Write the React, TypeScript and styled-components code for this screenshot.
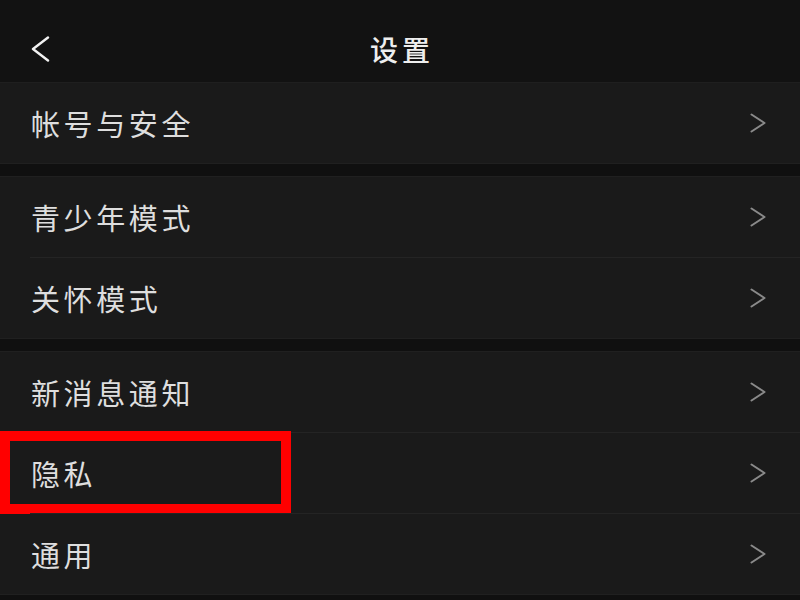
import styled, { createGlobalStyle } from "styled-components";

const Global = createGlobalStyle`
  html, body {
    margin: 0;
    padding: 0;
    background: #101010;
  }
  body {
    font-family: "Noto Sans CJK SC", "Noto Sans", sans-serif;
  }
`;

const Page = styled.div`
  width: 800px;
  height: 600px;
  overflow: hidden;
  background: #101010;
  display: flex;
  flex-direction: column;
`;

const Header = styled.header`
  height: 83px;
  box-sizing: border-box;
  padding-top: 16px;
  flex-shrink: 0;
  display: grid;
  grid-template-columns: 80px 1fr 80px;
  align-items: center;
  background: #121212;
  border-bottom: 1px solid #1f1f1f;
`;

const Back = styled.button`
  background: none;
  border: 0;
  padding: 0 0 0 31px;
  height: 100%;
  display: flex;
  align-items: center;
  color: #f0f0f0;
  cursor: pointer;
`;

const Title = styled.h1`
  margin: 0;
  text-align: center;
  font-size: 28px;
  font-weight: 500;
  letter-spacing: 4px;
  padding-left: 4px;
  color: #eeeeee;
  line-height: 1;
`;

const Group = styled.section`
  background: #1a1a1a;
  border-top: 1px solid #202020;
  border-bottom: 1px solid #202020;
  & + & {
    margin-top: 12px;
  }
`;

const Row = styled.div<{ $first?: boolean }>`
  position: relative;
  height: 80px;
  display: flex;
  align-items: center;
  justify-content: space-between;
  padding: 0 34px 0 31px;
  &::before {
    content: "";
    display: ${({ $first }) => ($first ? "none" : "block")};
    position: absolute;
    top: -1px;
    left: 30px;
    right: 0;
    height: 1px;
    background: #242424;
  }
  & + & {
    margin-top: 1px;
  }
`;

const Label = styled.span`
  font-size: 29px;
  letter-spacing: 3.6px;
  color: #dedede;
  line-height: 1;
`;

const Mark = styled.div`
  position: absolute;
  left: 0;
  top: -2px;
  width: 291px;
  height: 83px;
  box-sizing: border-box;
  border: 10px solid #ff0000;
  pointer-events: none;
`;

const Chevron = ({ color, w, h }: { color: string; w: number; h: number }) => (
  <svg width={w} height={h} viewBox={`0 0 ${w} ${h}`} fill="none">
    <polyline
      points={`1.5,1.5 ${w - 1.5},${h / 2} 1.5,${h - 1.5}`}
      stroke={color}
      strokeWidth="2"
      strokeLinecap="round"
      strokeLinejoin="round"
    />
  </svg>
);

const groups = [
  [{ label: "帐号与安全" }],
  [{ label: "青少年模式" }, { label: "关怀模式" }],
  [{ label: "新消息通知" }, { label: "隐私", marked: true }, { label: "通用" }],
];

export default function App() {
  return (
    <Page>
      <Global />
      <Header>
        <Back aria-label="返回">
          <svg width="20" height="26" viewBox="0 0 20 26" fill="none">
            <polyline
              points="17,1.5 2,13 17,24.5"
              stroke="#f2f2f2"
              strokeWidth="2.4"
              strokeLinecap="round"
              strokeLinejoin="round"
            />
          </svg>
        </Back>
        <Title>设置</Title>
        <span />
      </Header>
      {groups.map((g, gi) => (
        <Group key={gi} style={gi === 0 ? { borderTop: 0 } : undefined}>
          {g.map((it, i) => (
            <Row key={it.label} $first={i === 0}>
              <Label>{it.label}</Label>
              <Chevron color="#8a8a8a" w={16} h={20} />
              {"marked" in it && it.marked && <Mark />}
            </Row>
          ))}
        </Group>
      ))}
    </Page>
  );
}
